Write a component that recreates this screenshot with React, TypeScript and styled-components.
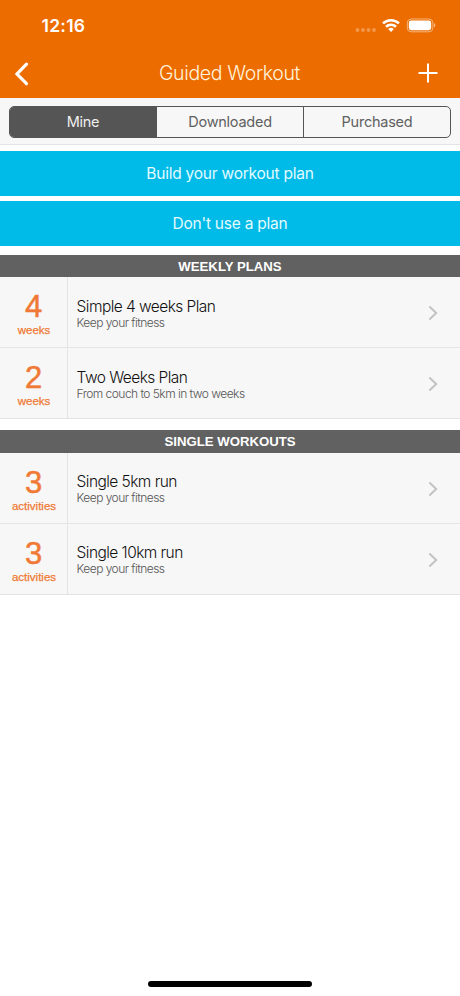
import React from "react";
import styled, { createGlobalStyle } from "styled-components";

const Global = createGlobalStyle`
  * { box-sizing: border-box; }
  body { margin: 0; background: #fff; font-family: Inter, "Liberation Sans", sans-serif; }
  button { font: inherit; border: 0; padding: 0; margin: 0; background: none; display: block; }
`;

const Screen = styled.div`
  width: 460px;
  height: 996px;
  display: flex;
  flex-direction: column;
  background: #fff;
  overflow: hidden;
`;

const Header = styled.header`
  height: 98px;
  flex: none;
  background: #ed6c00;
  color: #fff;
`;

const StatusBar = styled.div`
  height: 49px;
  display: flex;
  align-items: center;
  justify-content: space-between;
  padding: 3px 24px 0 41.5px;
`;

const Time = styled.span`
  font-size: 17.5px;
  font-weight: 600;
  line-height: 20px;
  letter-spacing: 0.25px;
`;

const NavBar = styled.div`
  height: 49px;
  display: grid;
  grid-template-columns: 60px 1fr 60px;
  align-items: center;
`;

const NavButton = styled.button<{ $end?: boolean }>`
  color: #fff;
  display: flex;
  justify-content: ${(p) => (p.$end ? "flex-end" : "flex-start")};
  padding: ${(p) => (p.$end ? "0 22px 1px 0" : "0 0 0 13px")};
`;

const Title = styled.h1`
  margin: 0;
  text-align: center;
  font-size: 19.5px;
  font-weight: 300;
  line-height: 24px;
  letter-spacing: -0.36px;
  padding: 0 1px 1px 0;
  color: #fff3dc;
`;

const SegmentBar = styled.div`
  height: 47px;
  flex: none;
  padding: 8px 9px 6px;
  background: #f7f7f7;
  border-bottom: 1px solid #e3e3e3;
`;

const Segments = styled.div`
  height: 32px;
  display: grid;
  grid-template-columns: 146px 147px 1fr;
  border: 1px solid #555;
  border-radius: 5px;
  overflow: hidden;
`;

const Segment = styled.button<{ $active?: boolean }>`
  font-size: 14.5px;
  line-height: 30px;
  letter-spacing: -0.25px;
  text-align: center;
  color: ${(p) => (p.$active ? "#eee" : "#606060")};
  background: ${(p) => (p.$active ? "#555" : "transparent")};
  & + & { border-left: 1px solid #555; }
`;

const Actions = styled.div`
  display: flex;
  flex-direction: column;
  gap: 5px;
  padding: 6px 0 8.5px;
`;

const ActionButton = styled.button`
  height: 45px;
  width: 100%;
  padding-top: 1px;
  background: #00bae8;
  color: #e3fbff;
  font-size: 15.5px;
  letter-spacing: -0.23px;
  line-height: 44px;
  text-align: center;
`;

const Section = styled.section`
  margin-bottom: 11px;
`;

const SectionTitle = styled.h2`
  margin: 0;
  height: 22.5px;
  background: #616161;
  color: #fff;
  font: bold 13.2px/23px "Liberation Sans", sans-serif;
  text-align: center;
`;

const Row = styled.div`
  height: 71px;
  display: grid;
  grid-template-columns: 68px 1fr auto;
  background: #f7f7f7;
  border-bottom: 1px solid #e4e4e4;
`;

const Count = styled.div`
  border-right: 1px solid #e4e4e4;
  padding: 13px 0 0 1px;
  text-align: center;
  color: #f07a35;
  font-family: "Liberation Sans", sans-serif;
`;

const CountValue = styled.div`
  font-size: 31px;
  line-height: 34px;
  padding-right: 1px;
  -webkit-text-stroke: 0.5px currentColor;
`;

const CountUnit = styled.div`
  font-size: 11.5px;
  line-height: 13px;
  -webkit-text-stroke: 0.25px currentColor;
`;

const Info = styled.div`
  padding: 19.9px 0 0 8.6px;
`;

const Name = styled.div`
  font-size: 15.5px;
  font-weight: 300;
  line-height: 19px;
  letter-spacing: -0.55px;
  color: #111;
`;

const Detail = styled.div`
  font-size: 12px;
  font-weight: 300;
  line-height: 14px;
  letter-spacing: -0.54px;
  color: #555;
`;

const Disclosure = styled.div`
  display: flex;
  align-items: center;
  padding: 2px 21px 0 0;
`;

const HomeArea = styled.div`
  margin-top: auto;
  height: 15px;
  display: flex;
  justify-content: center;
`;

const HomeIndicator = styled.div`
  width: 164px;
  height: 6px;
  border-radius: 3px;
  background: #000;
`;

const sections = [
  {
    title: "WEEKLY PLANS",
    rows: [
      { count: 4, unit: "weeks", name: "Simple 4 weeks Plan", detail: "Keep your fitness" },
      { count: 2, unit: "weeks", name: "Two Weeks Plan", detail: "From couch to 5km in two weeks" },
    ],
  },
  {
    title: "SINGLE WORKOUTS",
    rows: [
      { count: 3, unit: "activities", name: "Single 5km run", detail: "Keep your fitness" },
      { count: 3, unit: "activities", name: "Single 10km run", detail: "Keep your fitness" },
    ],
  },
];

const StatusIcons = () => (
  <svg width="82" height="20" viewBox="354 15 82 20" fill="none">
    <g fill="#fff" opacity=".3">
      <circle cx="357.5" cy="29" r="1.9" />
      <circle cx="363" cy="29" r="1.9" />
      <circle cx="368.5" cy="29" r="1.9" />
      <circle cx="374" cy="29" r="1.9" />
    </g>
    <g stroke="#fff" strokeWidth="2.6">
      <path d="M383 22.4a11.7 11.7 0 0 1 16 0" />
      <path d="M386 25.8a7.3 7.3 0 0 1 10 0" />
    </g>
    <path d="M388.2 28.1a4.1 4.1 0 0 1 5.6 0L391 31z" fill="#fff" />
    <rect x="407.3" y="18" width="25.6" height="12.8" rx="4" stroke="#fff" strokeOpacity=".5" />
    <rect x="408.8" y="19.6" width="22.4" height="9.6" rx="2.4" fill="#fff" />
    <path d="M434 22.3c1.8.7 1.8 3.5 0 4.2z" fill="#fff" fillOpacity=".55" />
  </svg>
);

const BackIcon = () => (
  <svg width="18" height="26" viewBox="0 0 18 26" fill="none" stroke="#fff" strokeWidth="3.2" strokeLinecap="round">
    <path d="M13.5 3.2 4 13l9.5 9.7" strokeLinejoin="miter" />
  </svg>
);

const PlusIcon = () => (
  <svg width="20" height="20" viewBox="0 0 20 20" stroke="#fff" strokeWidth="2">
    <path d="M10 .5v19M.5 10h19" />
  </svg>
);

const ChevronIcon = () => (
  <svg width="12" height="16" viewBox="0 0 12 16" fill="none" stroke="#c3c3c3" strokeWidth="2">
    <path d="M2.4 1.6 9.2 8l-6.8 6.4" />
  </svg>
);

export default function App() {
  return (
    <Screen>
      <Global />
      <Header>
        <StatusBar>
          <Time>12:16</Time>
          <StatusIcons />
        </StatusBar>
        <NavBar>
          <NavButton aria-label="Back"><BackIcon /></NavButton>
          <Title>Guided Workout</Title>
          <NavButton $end aria-label="Add"><PlusIcon /></NavButton>
        </NavBar>
      </Header>
      <SegmentBar>
        <Segments>
          <Segment $active>Mine</Segment>
          <Segment>Downloaded</Segment>
          <Segment>Purchased</Segment>
        </Segments>
      </SegmentBar>
      <Actions>
        <ActionButton>Build your workout plan</ActionButton>
        <ActionButton>Don't use a plan</ActionButton>
      </Actions>
      {sections.map((s) => (
        <Section key={s.title}>
          <SectionTitle>{s.title}</SectionTitle>
          {s.rows.map((r) => (
            <Row key={r.name}>
              <Count>
                <CountValue>{r.count}</CountValue>
                <CountUnit>{r.unit}</CountUnit>
              </Count>
              <Info>
                <Name>{r.name}</Name>
                <Detail>{r.detail}</Detail>
              </Info>
              <Disclosure><ChevronIcon /></Disclosure>
            </Row>
          ))}
        </Section>
      ))}
      <HomeArea><HomeIndicator /></HomeArea>
    </Screen>
  );
}
